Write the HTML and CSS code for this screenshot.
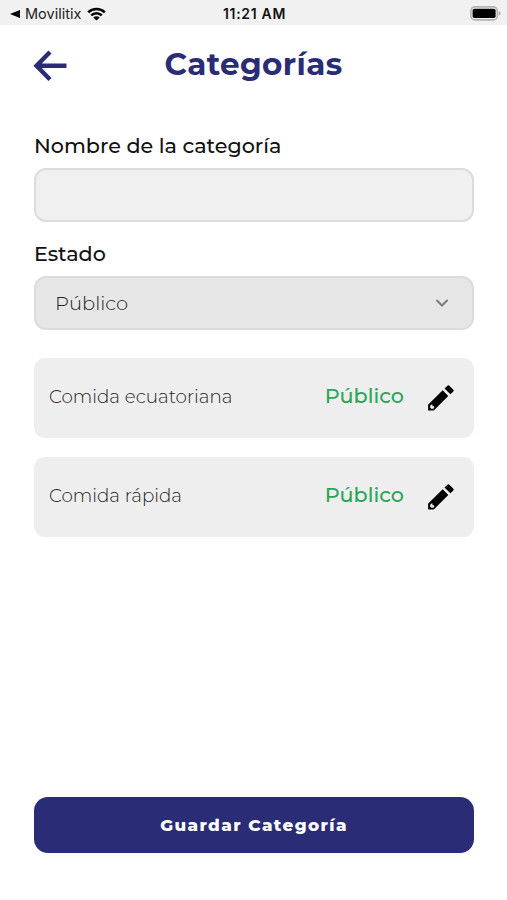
FILE: index.html
```html
<!DOCTYPE html>
<html lang="es">
<head>
    <meta charset="UTF-8">
    <meta name="viewport" content="width=device-width, initial-scale=1.0">
    <title>Categorías</title>
    <link rel="stylesheet" href="styles.css">
</head>
<body>

    <div class="status-bar">
        <div class="status-left">
            <svg class="back-app" width="10" height="8" viewBox="0 0 10 8"><path d="M0 4L10 0v8z"/></svg>
            <span class="app-name">Movilitix</span>
            <svg class="wifi" width="19" height="14" viewBox="0 0 19 14">
                <path d="M1.2 5.3a11.8 11.8 0 0 1 16.6 0M4.2 8.4a7.5 7.5 0 0 1 10.6 0" fill="none" stroke="#000" stroke-width="2.5"/>
                <path d="M9.5 13.6L6.3 10.5a4.6 4.6 0 0 1 6.4 0z"/>
            </svg>
        </div>
        <span class="time">11:21 AM</span>
        <svg class="battery" width="31" height="15" viewBox="0 0 31 15">
            <rect x="0.9" y="0.9" width="26.4" height="13" rx="4" fill="#f1f1f1" stroke="#b4b4b4" stroke-width="1.6"/>
            <rect x="2.6" y="2.8" width="23" height="9.2" rx="1.8"/>
            <path d="M28.7 5v4.8q1.8-.8 1.8-2.4T28.7 5z" fill="#aaa"/>
        </svg>
    </div>

    <header class="header">
        <svg class="back-arrow" width="34" height="32" viewBox="0 0 34 32">
            <path d="M17 2L3.5 15.8 17 29.5M3.5 15.8h30" fill="none" stroke="#2a2c76" stroke-width="4.4"/>
        </svg>
        <h1>Categorías</h1>
    </header>

    <main class="content">
        <form class="category-form">
            <label for="nombre">Nombre de la categoría</label>
            <input type="text" id="nombre" class="field">

            <label for="estado">Estado</label>
            <button type="button" id="estado" class="field select">
                <span>Público</span>
                <svg width="14" height="9" viewBox="0 0 14 9">
                    <path d="M2 1.5l5 5 5-5" fill="none" stroke="#7d7d7d" stroke-width="2.1" stroke-linecap="round"/>
                </svg>
            </button>
        </form>

        <ul class="category-list">
            <li class="category-item">
                <span class="category-name">Comida ecuatoriana</span>
                <span class="category-state">Público</span>
                <svg class="edit" width="26" height="26" viewBox="0 0 26 26">
                    <path fill-rule="evenodd" d="M.3 19.4L14.7 5.2l5.6 5.7L6 25.2q-.4.4-1 .4H1q-.9 0-.9-.9v-4.3q0-.6.2-1zM2.2 20.8v1.9l1.1 1h2l1-1-.2-1.4h-1.6v-1.7l-1.1-.1z"/>
                    <path d="M16.5 3.5l2.7-2.6q1.2-1.2 2.4 0l3.5 3.5q1.2 1.2 0 2.4l-2.7 2.5z"/>
                </svg>
            </li>
            <li class="category-item">
                <span class="category-name">Comida rápida</span>
                <span class="category-state">Público</span>
                <svg class="edit" width="26" height="26" viewBox="0 0 26 26">
                    <path fill-rule="evenodd" d="M.3 19.4L14.7 5.2l5.6 5.7L6 25.2q-.4.4-1 .4H1q-.9 0-.9-.9v-4.3q0-.6.2-1zM2.2 20.8v1.9l1.1 1h2l1-1-.2-1.4h-1.6v-1.7l-1.1-.1z"/>
                    <path d="M16.5 3.5l2.7-2.6q1.2-1.2 2.4 0l3.5 3.5q1.2 1.2 0 2.4l-2.7 2.5z"/>
                </svg>
            </li>
        </ul>

        <button type="button" class="save-btn">Guardar Categoría</button>
    </main>

</body>
</html>
```
FILE: styles.css
```css
* {
    box-sizing: border-box;
}

body {
    margin: 0;
    height: 900px;
    display: flex;
    flex-direction: column;
    background-color: #fff;
    font-family: Montserrat, Inter, sans-serif;
    color: #111;
}

.status-bar {
    display: grid;
    grid-template-columns: 1fr auto 1fr;
    align-items: center;
    height: 25px;
    padding: 2px 6px 0 10px;
    background-color: #f1f1f1;
    font-family: Inter, sans-serif;
    font-size: 14px;
}

.status-left {
    display: flex;
    align-items: center;
}

.app-name {
    margin: 0 6px 0 5px;
    font-size: 14.5px;
    color: #222;
}

.time {
    margin-right: 2px;
    font-weight: 600;
    letter-spacing: 0.7px;
}

.battery {
    justify-self: end;
}

.header {
    display: grid;
    grid-template-columns: 34px 1fr 34px;
    align-items: center;
    height: 80px;
    padding: 2px 33px 0;
}

.header h1 {
    margin: 0 0 4px;
    text-align: center;
    font-size: 31px;
    line-height: 40px;
    font-weight: 700;
    letter-spacing: 0.4px;
    color: #2a2c76;
}

.content {
    flex: 1;
    display: flex;
    flex-direction: column;
    padding: 28px 33px 47px 34px;
}

.category-form {
    display: flex;
    flex-direction: column;
}

.category-form label {
    height: 35px;
    font-size: 20.7px;
    line-height: 25px;
    font-weight: 500;
}

.field {
    width: 100%;
    height: 54px;
    margin-bottom: 19px;
    padding: 0 23px 0 19px;
    border: 2px solid #dcdcdc;
    border-radius: 12px;
    background-color: #f0f0f0;
    font-family: inherit;
    font-size: 19.5px;
    outline: none;
}

.select {
    display: flex;
    align-items: center;
    justify-content: space-between;
    margin-bottom: 28px;
    background-color: #e6e6e6;
    font-weight: 300;
    color: #222;
}

.category-list {
    display: flex;
    flex-direction: column;
    gap: 19px;
    margin: 0;
    padding: 0;
    list-style: none;
}

.category-item {
    display: flex;
    align-items: center;
    height: 80px;
    padding: 0 20px 0 15px;
    border-radius: 11px;
    background-color: #eee;
}

.category-name {
    flex: 1;
    margin-bottom: 4px;
    font-size: 18.3px;
    font-weight: 300;
    color: #222;
}

.category-state {
    margin: 0 24px 6px 0;
    font-size: 20.7px;
    font-weight: 500;
    color: #2aa65a;
}

.save-btn {
    height: 56px;
    margin-top: auto;
    border: none;
    border-radius: 14px;
    background-color: #2a2c76;
    font-family: inherit;
    font-size: 16.8px;
    font-weight: 800;
    letter-spacing: 1.4px;
    color: #fff;
}
```
